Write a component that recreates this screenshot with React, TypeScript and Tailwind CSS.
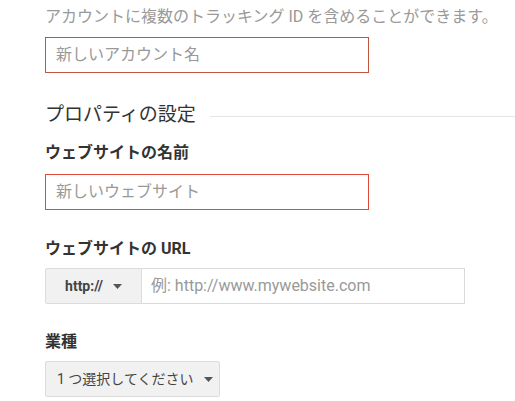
const font = "font-['Roboto','Noto_Sans_CJK_JP',sans-serif]";

function Caret() {
  return (
    <svg width="9" height="5" viewBox="0 0 9 5" className="ml-[10px] shrink-0">
      <path d="M0 0h9L4.5 5z" fill="#555" />
    </svg>
  );
}

function TextBox({ placeholder, border }: { placeholder: string; border: string }) {
  return (
    <div
      className={`flex h-9 w-[324px] items-center border px-[10px] text-[16px] text-[#999] ${border}`}
    >
      {placeholder}
    </div>
  );
}

function Label({ children }: { children: React.ReactNode }) {
  return <div className="text-[16px] font-bold leading-5 text-[#333]">{children}</div>;
}

export default function App() {
  return (
    <div className={`${font} min-h-[401px] w-[515px] overflow-hidden bg-white pl-[45px]`}>
      <p className="pt-[7px] text-[16px] leading-5 whitespace-nowrap text-[#999]">
        アカウントに複数のトラッキング ID を含めることができます。
      </p>
      <div className="mt-[10px]">
        <TextBox placeholder="新しいアカウント名" border="border-[#c2553f]" />
      </div>

      <div className="mt-[30px] flex items-center">
        <h2 className="text-[19px] leading-6 font-normal text-[#333]">プロパティの設定</h2>
        <div className="ml-[14px] mt-[2px] h-px flex-1 bg-[#e5e5e5]" />
      </div>

      <div className="mt-[16px]">
        <Label>ウェブサイトの名前</Label>
      </div>
      <div className="mt-[11px]">
        <TextBox placeholder="新しいウェブサイト" border="border-[#dd4b39]" />
      </div>

      <div className="mt-[29px]">
        <Label>ウェブサイトの URL</Label>
      </div>
      <div className="mt-[9px] flex h-9 w-[420px]">
        <button className="flex w-[97px] items-center justify-center rounded-l-[2px] border border-[#dcdcdc] bg-[#f1f1f1] text-[14px] font-bold text-[#444]">
          http://
          <Caret />
        </button>
        <div className="flex flex-1 items-center border border-l-0 border-[#d9d9d9] px-[9px] text-[16px] text-[#999]">
          例: http://www.mywebsite.com
        </div>
      </div>

      <div className="mt-[28px]">
        <Label>業種</Label>
      </div>
      <button className="mt-[9px] flex h-9 w-[175px] items-center rounded-[2px] border border-[#dcdcdc] bg-[#f1f1f1] pl-[11px] text-[14px] text-[#444]">
        1 つ選択してください
        <Caret />
      </button>
    </div>
  );
}
